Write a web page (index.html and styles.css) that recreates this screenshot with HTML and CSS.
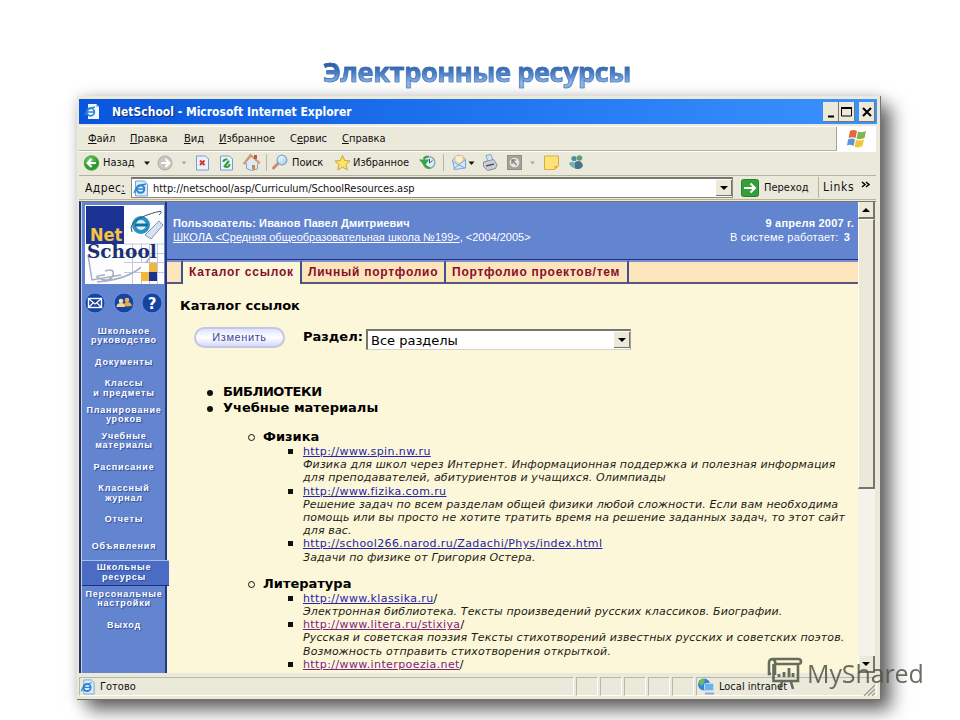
FILE: index.html
```html
<!DOCTYPE html>
<html lang="ru">

<head>
    <meta charset="utf-8">
    <title>Электронные ресурсы</title>
    <link rel="stylesheet" href="styles.css">
</head>

<body>
    <h1 class="heading"><span>Электронные ресурсы</span></h1>

    <div class="window">
        <!-- Title bar -->
        <div class="titlebar">
            <svg class="title-icon" width="16" height="17" viewBox="0 0 16 17">
                <path d="M4 1h8l3 3v12H4z" fill="#f4f9ff" />
                <path d="M12 1v3h3z" fill="#9fc1ee" />
                <circle cx="6.5" cy="9" r="3.8" fill="none" stroke="#2b86cf" stroke-width="1.8" />
                <path d="M3 9h7M1 12Q3 5 11 4" fill="none" stroke="#2b86cf" stroke-width="1.3" />
            </svg>
            <span class="title"><b>NetSchool</b> - Microsoft Internet Explorer</span>
            <div class="buttons">
                <span class="wbtn"><svg width="15" height="20"><path d="M5 14.5h6" stroke="#000" stroke-width="2" /></svg></span>
                <span class="wbtn"><svg width="15" height="20"><path d="M2.5 6v8h10V6z" fill="none" stroke="#000" /><path d="M2 6h11" stroke="#000" stroke-width="2" /></svg></span>
                <span class="wbtn close"><svg width="15" height="20"><path d="M4 6l8 8M12 6l-8 8" stroke="#000" stroke-width="2" /></svg></span>
            </div>
        </div>

        <!-- Menu -->
        <div class="menubar">
            <span class="m1"><u>Ф</u>айл</span>
            <span class="m2"><u>П</u>равка</span>
            <span class="m3"><u>В</u>ид</span>
            <span class="m4"><u>И</u>збранное</span>
            <span class="m5">С<u>е</u>рвис</span>
            <span class="m6"><u>С</u>правка</span>
            <div class="flag">
                <svg width="20" height="20" viewBox="0 0 20 20">
                    <path d="M3 2Q6 0 10 2L8.500 9Q5 7.500 1.500 9z" fill="#e2683c" />
                    <path d="M11 2.500Q15 4 19 2L17.500 9Q13 11 9.500 9.500z" fill="#7db84a" />
                    <path d="M1 10.500Q5 8.500 8 10.500L6.500 17Q3 15 0 16.500z" fill="#5b93d8" />
                    <path d="M9 11Q13 12 17 10.500L15.500 17Q11 19.500 7.500 17.500z" fill="#f2c53a" />
                </svg>
            </div>
        </div>

        <!-- Toolbar -->
        <div class="toolbar">
            <svg width="750" height="25" viewBox="83 150 750 25">
                <defs>
                    <radialGradient id="green" cx=".4" cy=".3"><stop offset="0" stop-color="#7ed36a" /><stop offset="1" stop-color="#2c9a2c" /></radialGradient>
                    <linearGradient id="lens" x2="1" y2="1"><stop offset="0" stop-color="#fff" /><stop offset="1" stop-color="#9ccbe8" /></linearGradient>
                </defs>
                <circle cx="91.500" cy="163" r="7.300" fill="url(#green)" stroke="#4b9a45" stroke-width=".8" />
                <path d="M96 163h-8M91.500 159l-4 4 4 4" fill="none" stroke="#fff" stroke-width="2" />
                <path d="M144 161.500h6l-3 3.500z" fill="#111" />
                <circle cx="165" cy="163" r="7" fill="#c9c8c2" stroke="#aaa9a3" />
                <path d="M161 163h8M165.500 159l4 4-4 4" fill="none" stroke="#fff" stroke-width="2" />
                <path d="M181.500 161.500h5l-2.500 3z" fill="#aaa899" />
                <path d="M196.500 156h9l3 3v11h-12z" fill="#eaf2fd" stroke="#7a9cc9" />
                <path d="M200 160.500l4.500 4.500M204.500 160.500l-4.500 4.500" stroke="#d8332b" stroke-width="2" />
                <path d="M220.500 156h9l3 3v11h-12z" fill="#eaf2fd" stroke="#7a9cc9" />
                <path d="M223.500 162q0-3 4-2.500M229.500 164q0 3.500-4 3M224 167l5-6" fill="none" stroke="#2f9c36" stroke-width="2" />
                <path d="M244.500 164l7-8 8 7-2 1v5l-6 1.500-5-2v-5z" fill="#dfe9f6" stroke="#86a0c6" />
                <path d="M243.500 164l7-9 9 8" fill="none" stroke="#d69a63" stroke-width="2" />
                <path d="M254 155h3v4h-3z" fill="#c35c37" />
                <path d="M252 165h3v5l-3-.5z" fill="#c98c4a" />
                <path d="M266.500 154v17" stroke="#b9b6a6" />
                <path d="M273.500 168l5-5" stroke="#c68b7c" stroke-width="3" stroke-linecap="round" />
                <circle cx="282" cy="160" r="4.800" fill="url(#lens)" stroke="#7ba9cf" stroke-width="1.300" />
                <path d="M342.500 155.500l2.200 5 5.300.5-4 3.600 1.200 5.300-4.700-2.800-4.700 2.800 1.200-5.300-4-3.600 5.300-.5z" fill="#fbe66a" stroke="#d0a335" />
                <circle cx="429" cy="162.500" r="5.800" fill="#dfeef4" stroke="#8bacbb" stroke-width="1.500" />
                <path d="M423.500 158.500q2-2 5-2M421 160.500l3.500 4 3-4z" fill="#38a244" stroke="#38a244" stroke-width="1.800" />
                <path d="M424.500 164.500q2 3.500 5.500 3.500" fill="none" stroke="#38a244" stroke-width="2.200" />
                <path d="M429.500 159v4l3-2.500" fill="none" stroke="#335d87" />
                <path d="M443.500 154v17" stroke="#b9b6a6" />
                <path d="M452.500 160l6-5 7 4v9l-11 1.500z" fill="#d5e8fa" stroke="#7fa5ce" />
                <path d="M455 156l8-.5v6l-4 2-4-2.500z" fill="#fcefc6" stroke="#d9b98a" stroke-width=".7" />
                <path d="M452.500 161l6 4 7-5.500M453.500 169l5-4 6.500 3" fill="none" stroke="#7fa5ce" />
                <path d="M468.500 161.500h6l-3 3.500z" fill="#111" />
                <path d="M486 155.500l5-1 2 6-5 2z" fill="#cfe5fb" stroke="#88a7c9" />
                <path d="M483.500 162l10-2.500 3.500 5-1.500 4-8 2-4-4z" fill="#ccd0d6" stroke="#858c98" />
                <path d="M486 166l8-2" stroke="#4d5768" stroke-width="1.500" />
                <rect x="507.500" y="155.500" width="14" height="14" fill="#a4a39b" stroke="#8f8e86" />
                <circle cx="514.500" cy="162.500" r="4.800" fill="#e7e5db" />
                <path d="M512 160l4.500 5M512 164v-4h4" fill="none" stroke="#85847c" stroke-width="1.400" />
                <path d="M530 161.500h5l-2.500 3z" fill="#aaa899" />
                <path d="M544.500 156h14v10l-4 3.500h-10z" fill="#fde27a" stroke="#d8ad3f" />
                <path d="M554.500 169.500v-3.500h4z" fill="#e9a92e" />
                <circle cx="574" cy="158.500" r="2.600" fill="#4d8f9b" />
                <circle cx="579.500" cy="158" r="2.800" fill="#5c9d83" />
                <path d="M569 163q5-3 7 1.500t-2 3.500q-4-1-5-5z" fill="#6fb4b2" />
                <path d="M575 162q6-3 8 3.500-2 5-8 3z" fill="#47758f" />
            </svg>
            <span class="t1">Назад</span>
            <span class="t2">Поиск</span>
            <span class="t3">Избранное</span>
        </div>

        <!-- Address -->
        <div class="address">
            <span class="lbl">Адрес<u>:</u></span>
            <div class="url">
                <svg width="16" height="17" viewBox="0 0 16 17">
                    <path d="M2.500 1h9l3 3v12h-12z" fill="#dcebfb" stroke="#7ba2d4" />
                    <circle cx="7.500" cy="9" r="3.800" fill="none" stroke="#2a86cf" stroke-width="2" />
                    <path d="M4 9h7M1 13Q3 5 13 4" fill="none" stroke="#2a86cf" stroke-width="1.300" />
                </svg>
                <span class="link">http://netschool/asp/Curriculum/SchoolResources.asp</span>
                <i class="drop"></i>
            </div>
            <svg class="go" width="18" height="18" viewBox="0 0 18 18">
                <rect x=".5" y=".5" width="17" height="17" rx="2" fill="#35a03a" stroke="#2b7d31" />
                <path d="M3 9h11M9.500 4.500L14 9l-4.500 4.500" fill="none" stroke="#fff" stroke-width="2" />
            </svg>
            <span class="gotext">Переход</span>
            <span class="links">Links</span>
            <svg class="more" width="10" height="8"><path d="M1 1l3 2.500L1 6M5 1l3 2.500L5 6" fill="none" stroke="#000" stroke-width="1.500" /></svg>
        </div>

        <!-- Page -->
        <div class="page">
            <div class="side">
                <svg class="logo" width="79" height="79" viewBox="0 0 79 79">
                    <rect width="79" height="79" fill="#fdfdfe" />
                    <rect x="1" y="1" width="38" height="38" fill="#1c3292" />
                    <path d="M39 48.500h40M39 57.500h40M39 67.500h40M47.500 39v40M56.500 39v40M64.500 39v40M72.500 39v40M39 39h40" stroke="#c6c6e0" fill="none" />
                    <path d="M3 50L7 75 36 70M20 66q10-3 8 4t-12 4 4-4M12 77Q52 74 66 51" fill="none" stroke="#a8afc4" stroke-width="1.500" />
                    <path d="M60 30l14-14 4 4-12 14z" fill="#d7e2f2" stroke="#7e94bd" />
                    <circle cx="56" cy="20" r="7" fill="#d9f1fa" stroke="#2793bf" stroke-width="4" />
                    <path d="M50 20h13" stroke="#1a6c9c" stroke-width="3" />
                    <path d="M47 27Q42 17 62 10t12 0" fill="none" stroke="#31527f" />
                    <path d="M64 58h8v9h-8zM56 67h8v9h-8z" fill="#f2b63c" />
                    <path d="M64 67h8v9h-8z" fill="#1c3292" />
                    <path d="M56 58h8v9h-8z" fill="#fff" />
                    <text x="5" y="35.500" class="net">Net</text>
                    <text x="2" y="53" class="school">School</text>
                </svg>
                <div class="round">
                    <svg width="22" height="22" viewBox="0 0 22 22"><circle cx="11" cy="11" r="10" fill="#15439f" stroke="#5f91ee" /><rect x="4.500" y="6.500" width="13" height="9" fill="#15439f" stroke="#fff" stroke-width="1.400" /><path d="M5 7l6 5 6-5M5 15l4-4M17 15l-4-4" fill="none" stroke="#fff" stroke-width="1.200" /></svg>
                    <svg width="22" height="22" viewBox="0 0 22 22"><circle cx="11" cy="11" r="10" fill="#15439f" stroke="#5f91ee" /><circle cx="8" cy="9" r="2.300" fill="#f5dca0" /><path d="M3.500 15q0-4 4.500-4t4 4z" fill="#f5d68d" /><circle cx="14" cy="8" r="2.300" fill="#e7b060" /><path d="M11 13q0-3 3.500-3t4.500 4l-6 .5z" fill="#e3ad4e" /></svg>
                    <svg width="22" height="22" viewBox="0 0 22 22"><circle cx="11" cy="11" r="10" fill="#15439f" stroke="#5f91ee" /><text x="11" y="16.500" class="q">?</text></svg>
                </div>
                <ul class="nav">
                    <li>Школьное<br>руководство</li>
                    <li>Документы</li>
                    <li>Классы<br>и предметы</li>
                    <li>Планирование<br>уроков</li>
                    <li>Учебные<br>материалы</li>
                    <li>Расписание</li>
                    <li>Классный<br>журнал</li>
                    <li>Отчеты</li>
                    <li>Объявления</li>
                    <li class="sel">Школьные<br>ресурсы</li>
                    <li>Персональные<br>настройки</li>
                    <li>Выход</li>
                </ul>
            </div>

            <div class="main">
                <div class="head">
                    <div>
                        <b class="user">Пользователь: Иванов Павел Дмитриевич</b>
                        <div class="school-name"><u>ШКОЛА &lt;Средняя общеобразовательная школа №199&gt;</u>, &lt;2004/2005&gt;</div>
                    </div>
                    <div class="right">
                        <b class="date">9 апреля 2007 г.</b>
                        <div class="online">В системе работает: <b>3</b></div>
                    </div>
                </div>
                <div class="tabs">
                    <span class="tab gap"></span>
                    <span class="tab on">Каталог ссылок</span>
                    <span class="tab second">Личный портфолио</span>
                    <span class="tab third">Портфолио проектов/тем</span>
                    <span class="tab rest"></span>
                </div>
                <div class="content">
                    <h2>Каталог ссылок</h2>
                    <div class="filter">
                        <span class="edit">Изменить</span>
                        <b class="section">Раздел:</b>
                        <div class="select"><span>Все разделы</span><i class="drop"></i></div>
                    </div>
                    <ul class="top">
                        <li class="lib">БИБЛИОТЕКИ</li>
                        <li>Учебные материалы</li>
                    </ul>
                    <h3 class="h-fiz">Физика</h3>
                    <ul class="res">
                        <li><a>http://www.spin.nw.ru</a>
                            <p>Физика для школ через Интернет. Информационная поддержка и полезная информация<br>для преподавателей, абитуриентов и учащихся. Олимпиады</p></li>
                        <li><a>http://www.fizika.com.ru</a>
                            <p>Решение задач по всем разделам общей физики любой сложности. Если вам необходима<br>помощь или вы просто не хотите тратить время на решение заданных задач, то этот сайт<br>для вас.</p></li>
                        <li><a>http://school266.narod.ru/Zadachi/Phys/index.html</a>
                            <p>Задачи по физике от Григория Остера.</p></li>
                    </ul>
                    <h3 class="h-lit">Литература</h3>
                    <ul class="res">
                        <li><a>http://www.klassika.ru</a>/
                            <p>Электронная библиотека. Тексты произведений русских классиков. Биографии.</p></li>
                        <li><a class="seen">http://www.litera.ru/stixiya</a>/
                            <p>Русская и советская поэзия Тексты стихотворений известных русских и советских поэтов.<br>Возможность отправить стихотворения открыткой.</p></li>
                        <li><a class="seen">http://www.interpoezia.net</a>/
                            <p>"Interpoezia" - поэтический раздел.</p></li>
                    </ul>
                </div>
            </div>

            <div class="scroll">
                <span class="sbtn"><i class="up"></i></span>
                <span class="thumb"></span>
                <span class="sbtn down"><i></i></span>
            </div>
        </div>

        <!-- Status bar -->
        <div class="status">
            <span class="pane ready">
                <svg width="16" height="16" viewBox="0 0 16 17">
                    <path d="M3.500 1h8l3 3v12h-11z" fill="#dcebfb" stroke="#7ba2d4" />
                    <circle cx="7" cy="9" r="3.800" fill="none" stroke="#2a86cf" stroke-width="2" />
                    <path d="M4 9h7M1 13Q3 5 12 4" fill="none" stroke="#2a86cf" stroke-width="1.300" />
                </svg>
                <span class="done">Готово</span>
            </span>
            <span class="pane"></span>
            <span class="pane"></span>
            <span class="pane"></span>
            <span class="pane"></span>
            <span class="pane"></span>
            <span class="pane zone">
                <svg width="18" height="17" viewBox="0 0 18 17">
                    <circle cx="7" cy="6.500" r="6" fill="#3b82d4" />
                    <path d="M2 4q3-4 6-3l-1 4-3 3zM9 7l4-2v4z" fill="#5fc45a" />
                    <rect x="7.500" y="5.500" width="9" height="7" rx="1" fill="#69b4ee" stroke="#b8d9ef" />
                    <path d="M8 15.500h9" stroke="#8fa9cb" stroke-width="2" />
                </svg>
                <span class="local">Local intranet</span>
                <svg class="grip" width="12" height="12"><path d="M1 12L12 1M5 12l7-7M9 12l3-3" stroke="#9c9a8a" stroke-width="1.300" /></svg>
            </span>
        </div>
    </div>

    <!-- Watermark -->
    <div class="mark">
        <svg width="36" height="34" viewBox="0 0 36 34">
            <path d="M4 17H2V6q0-4 4-4h25q3 0 3 2.500T31 7H8M5 2q4 1 3 5v11M6.500 7v17H31V7M15 25l-2 7M24 25l2 7" fill="none" stroke="#4d5547" stroke-width="2.600" />
            <path d="M12 20v-3M17 20v-5M22 20V11M26 20v-4" stroke="#4d5547" stroke-width="2.800" />
        </svg>
        <span>MyShared</span>
    </div>
</body>

</html>
```
FILE: styles.css
```css
body {
    margin: 0;
    width: 960px;
    height: 720px;
    overflow: hidden;
    background: #fff;
    position: relative;
    font-family: "DejaVu Sans", Verdana, sans-serif;
    white-space: nowrap;
}

ul, h1, h2, h3, p {
    margin: 0;
    padding: 0;
    list-style: none;
}

svg {
    display: block;
    flex: none;
}

i {
    font-style: normal;
}

.heading {
    height: 43px;
    padding: 53px 0 0 323px;
    font: bold 27px/38px "Open Sans", sans-serif;
    letter-spacing: -0.35px;
}

.heading span {
    background: linear-gradient(#26559f 25%, #4a80c8 55%, #8db4e6 80%);
    -webkit-background-clip: text;
    background-clip: text;
    color: transparent;
    -webkit-text-stroke: 0.6px #3f6fb0;
}

.window {
    box-sizing: border-box;
    width: 804px;
    height: 604px;
    margin-left: 77px;
    padding: 3px 2px 0;
    background: #ebe9da;
    border-right: 1px solid #77756a;
    border-bottom: 1px solid #77756a;
    box-shadow: 10px 10px 17px rgba(0, 0, 0, 0.6), 0 0 12px rgba(0, 0, 0, 0.15);
}

/* Title bar */
.titlebar {
    display: flex;
    align-items: center;
    height: 25px;
    width: 798px;
    background: linear-gradient(90deg, #0a55dd, #1f74ef 50%, #3a93ff);
}

.title-icon {
    margin-left: 5px;
}

.title {
    margin-left: 12px;
    color: #fff;
    font: bold 12px "DejaVu Sans Condensed", sans-serif;
}

.title b {
    text-shadow: 1px 1px 1px #0a2a7a;
}

.buttons {
    display: flex;
    margin-left: auto;
    margin-right: 2px;
}

.wbtn {
    box-sizing: border-box;
    width: 16px;
    height: 20px;
    background: #ece9d8;
    border-right: 1px solid #77766c;
    border-bottom: 1px solid #77766c;
}

.close {
    margin-left: 4px;
}

/* Menu */
.menubar, .toolbar, .address {
    display: flex;
    align-items: center;
    box-sizing: border-box;
    width: 797px;
    font: 11px "DejaVu Sans Condensed", Tahoma, sans-serif;
    color: #111;
    border-bottom: 1px solid #b5b2a4;
}

.menubar {
    margin-top: 2px;
    height: 25px;
    border-top: 1px solid #fff;
    padding-left: 9px;
}

.menubar > span {
    flex: none;
}

.m1 { width: 42px; }
.m2 { width: 54px; }
.m3 { width: 35px; }
.m4 { width: 71px; }
.m5 { width: 52px; }

.flag {
    display: flex;
    align-items: center;
    justify-content: center;
    width: 39px;
    height: 24px;
    margin-left: auto;
    background: #fff;
    border-left: 1px solid #a5a296;
}

.toolbar {
    position: relative;
    height: 25px;
    border-top: 1px solid #fff;
}

.toolbar svg {
    margin: -2px 0 0 4px;
}

.toolbar span {
    position: absolute;
    top: 4px;
}

.t1 { left: 24px; }
.t2 { left: 213px; }
.t3 { left: 274px; }

.address {
    height: 24px;
    padding-left: 6px;
}

.lbl {
    width: 46px;
    font-size: 12px;
    letter-spacing: 0.4px;
}

.url {
    display: flex;
    align-items: center;
    box-sizing: border-box;
    width: 602px;
    height: 21px;
    background: #fff;
    border: 1px solid #8c8a7c;
    border-top: 2px solid #77766c;
    padding-left: 1px;
}

.link {
    margin-left: 4px;
    letter-spacing: -0.05px;
}

.drop {
    box-sizing: border-box;
    display: flex;
    align-items: center;
    justify-content: center;
    width: 16px;
    height: 16px;
    margin-left: auto;
    background: #ece9d8;
    border-right: 1px solid #77766c;
    border-bottom: 1px solid #77766c;
}

.drop::after, .sbtn i {
    content: "";
    border: 4px solid transparent;
    border-top-color: #000;
    border-bottom: 0;
}

.go {
    margin-left: 8px;
}

.gotext {
    width: 54px;
    margin-left: 5px;
}

.links {
    border-left: 1px solid #b5b2a4;
    padding-left: 4px;
    font-size: 12px;
    line-height: 21px;
    letter-spacing: 0.7px;
}

.more {
    margin: -6px 0 0 7px;
}

/* Page */
.page {
    display: flex;
    box-sizing: border-box;
    width: 797px;
    height: 472px;
    margin-top: 1px;
    overflow: hidden;
    border-top: 1px solid #77766c;
    border-left: 2px solid #20305f;
}

.side {
    box-sizing: border-box;
    width: 86px;
    height: 472px;
    flex: none;
    background: #6384cf;
    border-left: 1px solid #c6d2f0;
    border-right: 2px solid #23377f;
    padding-top: 3px;
}

.logo {
    margin-left: 3px;
}

.net {
    font: bold 18px "DejaVu Sans Condensed", sans-serif;
    fill: #f5c542;
}

.school {
    font: bold 18.500px "DejaVu Serif", serif;
    fill: #1c2f6e;
}

.round {
    display: flex;
    gap: 6.5px;
    margin: 8px 0 0 2px;
}

.q {
    font: bold 15px "DejaVu Sans", sans-serif;
    fill: #fff;
    text-anchor: middle;
}

.nav {
    margin-top: 9px;
    font: bold 9px/9.5px "Liberation Sans", Arial, sans-serif;
    letter-spacing: 0.8px;
    color: #fff;
    text-align: center;
    text-shadow: 1px 1px 1px #2d4a99;
}

.nav li {
    display: flex;
    align-items: center;
    justify-content: center;
    height: 26.3px;
    padding-left: 1px;
}

.nav .sel {
    position: relative;
    box-sizing: border-box;
    width: 87px;
    background: #4a6cc4;
    border-top: 1px solid #a9bdec;
    border-bottom: 1px solid #1b3076;
    padding-right: 4px;
}

.main {
    width: 691px;
    flex: none;
    background: #fdf7da;
}

.head {
    display: flex;
    justify-content: space-between;
    box-sizing: border-box;
    height: 58px;
    padding: 14px 4px 0 6px;
    background: #6384cf;
    color: #fff;
    font: 11px/14px "Liberation Sans", Arial, sans-serif;
    border-bottom: 1px solid #22307f;
}

.user {
    letter-spacing: 0.1px;
}

.right {
    text-align: right;
    letter-spacing: 0.2px;
}

.online {
    padding-right: 4px;
}

.online b {
    margin-left: 2px;
}

.tabs {
    display: flex;
    height: 24px;
    background: #fdf7da;
    font: bold 12px/20px "Liberation Sans", Arial, sans-serif;
    letter-spacing: 0.75px;
    color: #860f2d;
}

.tab {
    box-sizing: border-box;
    background: #fde5bb;
    border-top: 2px solid #7b8fd0;
    border-bottom: 2px solid #59597f;
    border-right: 2px solid #40508f;
    padding-left: 6px;
    height: 24px;
}

.gap { width: 16px; }
.on { width: 119px; background: #fdf7da; border-bottom: 0; }
.second { width: 144px; }
.third { width: 183px; }
.rest { flex: 1; border-right: 0; }

.content {
    padding-left: 13px;
}

h2 {
    padding-top: 12px;
    font-size: 13px;
    line-height: 20px;
}

.filter {
    display: flex;
    align-items: flex-start;
    height: 57px;
    padding: 11px 0 0 14px;
}

.edit {
    box-sizing: border-box;
    width: 91px;
    height: 21px;
    border: 2px solid #c3c6ea;
    border-radius: 11px;
    background: linear-gradient(#dfe3fb, #fff 50%, #d5daf8);
    color: #41459a;
    font: 11px/17px "Liberation Sans", Arial, sans-serif;
    letter-spacing: 0.6px;
    text-align: center;
}

.section {
    width: 63px;
    margin-left: 18px;
    font-size: 13px;
    line-height: 20px;
}

.select {
    display: flex;
    align-items: center;
    box-sizing: border-box;
    width: 265px;
    height: 21px;
    margin-top: 2px;
    border: 2px solid #77766c;
    border-right: 1px solid #a5a395;
    border-bottom: 1px solid #d5d3c5;
    background: #fff;
    padding-left: 3px;
    font-size: 13px;
}

.top {
    padding-left: 43px;
    font-size: 13px;
    font-weight: bold;
    line-height: 16px;
}

.lib {
    letter-spacing: -0.4px;
}

.top li::before {
    content: "";
    float: left;
    width: 6px;
    height: 6px;
    margin: 6px 0 0 -16px;
    border-radius: 3px;
    background: #111;
}

h3 {
    padding-left: 83px;
    font-size: 13px;
    line-height: 16px;
}

h3::before {
    content: "";
    float: left;
    width: 5px;
    height: 5px;
    margin: 5px 0 0 -15px;
    border: 1px solid #111;
    border-radius: 4px;
}

.h-fiz { margin-top: 13px; }
.h-lit { margin-top: 12px; }

.res {
    padding-left: 123px;
    font-size: 11px;
    line-height: 13.2px;
}

.res li::before {
    content: "";
    float: left;
    width: 5px;
    height: 5px;
    margin: 4px 0 0 -15px;
    background: #111;
}

.res a {
    color: #2523a8;
    text-decoration: underline;
    letter-spacing: 0.4px;
}

.res .seen {
    color: #7b2381;
}

.res p {
    font-style: italic;
    letter-spacing: 0.13px;
    color: #1c1c14;
}

/* Scrollbar */
.scroll {
    display: flex;
    flex-direction: column;
    width: 17px;
    height: 471px;
    background: #f4f2ea;
}

.sbtn, .thumb {
    box-sizing: border-box;
    background: #ece9d8;
    border-left: 1px solid #fff;
    border-right: 2px solid #77766c;
    border-bottom: 2px solid #77766c;
}

.sbtn {
    display: flex;
    align-items: center;
    justify-content: center;
    height: 17px;
}

.sbtn .up {
    transform: rotate(180deg);
}

.down {
    margin-top: auto;
}

.thumb {
    height: 270px;
    border-top: 1px solid #fff;
}

/* Status bar */
.status {
    display: flex;
    gap: 2px;
    width: 798px;
    margin-top: 4px;
    font: 11px "DejaVu Sans Condensed", Tahoma, sans-serif;
    color: #111;
}

.pane {
    display: flex;
    align-items: center;
    box-sizing: border-box;
    width: 22px;
    height: 19px;
    border: 1px solid #b9b7a8;
    border-right-color: #fff;
    border-bottom-color: #fff;
}

.ready { width: 495px; }
.zone { flex: 1; }
.done, .local { margin-left: 4px; }

.grip {
    margin: 6px 1px 0 auto;
}

.mark {
    position: absolute;
    left: 767px;
    top: 657px;
    display: flex;
    align-items: center;
    color: #4d5547;
    font: 25px "Open Sans", sans-serif;
    letter-spacing: -0.1px;
    opacity: 0.85;
}

.mark span {
    margin: -3px 0 0 4px;
}
```
